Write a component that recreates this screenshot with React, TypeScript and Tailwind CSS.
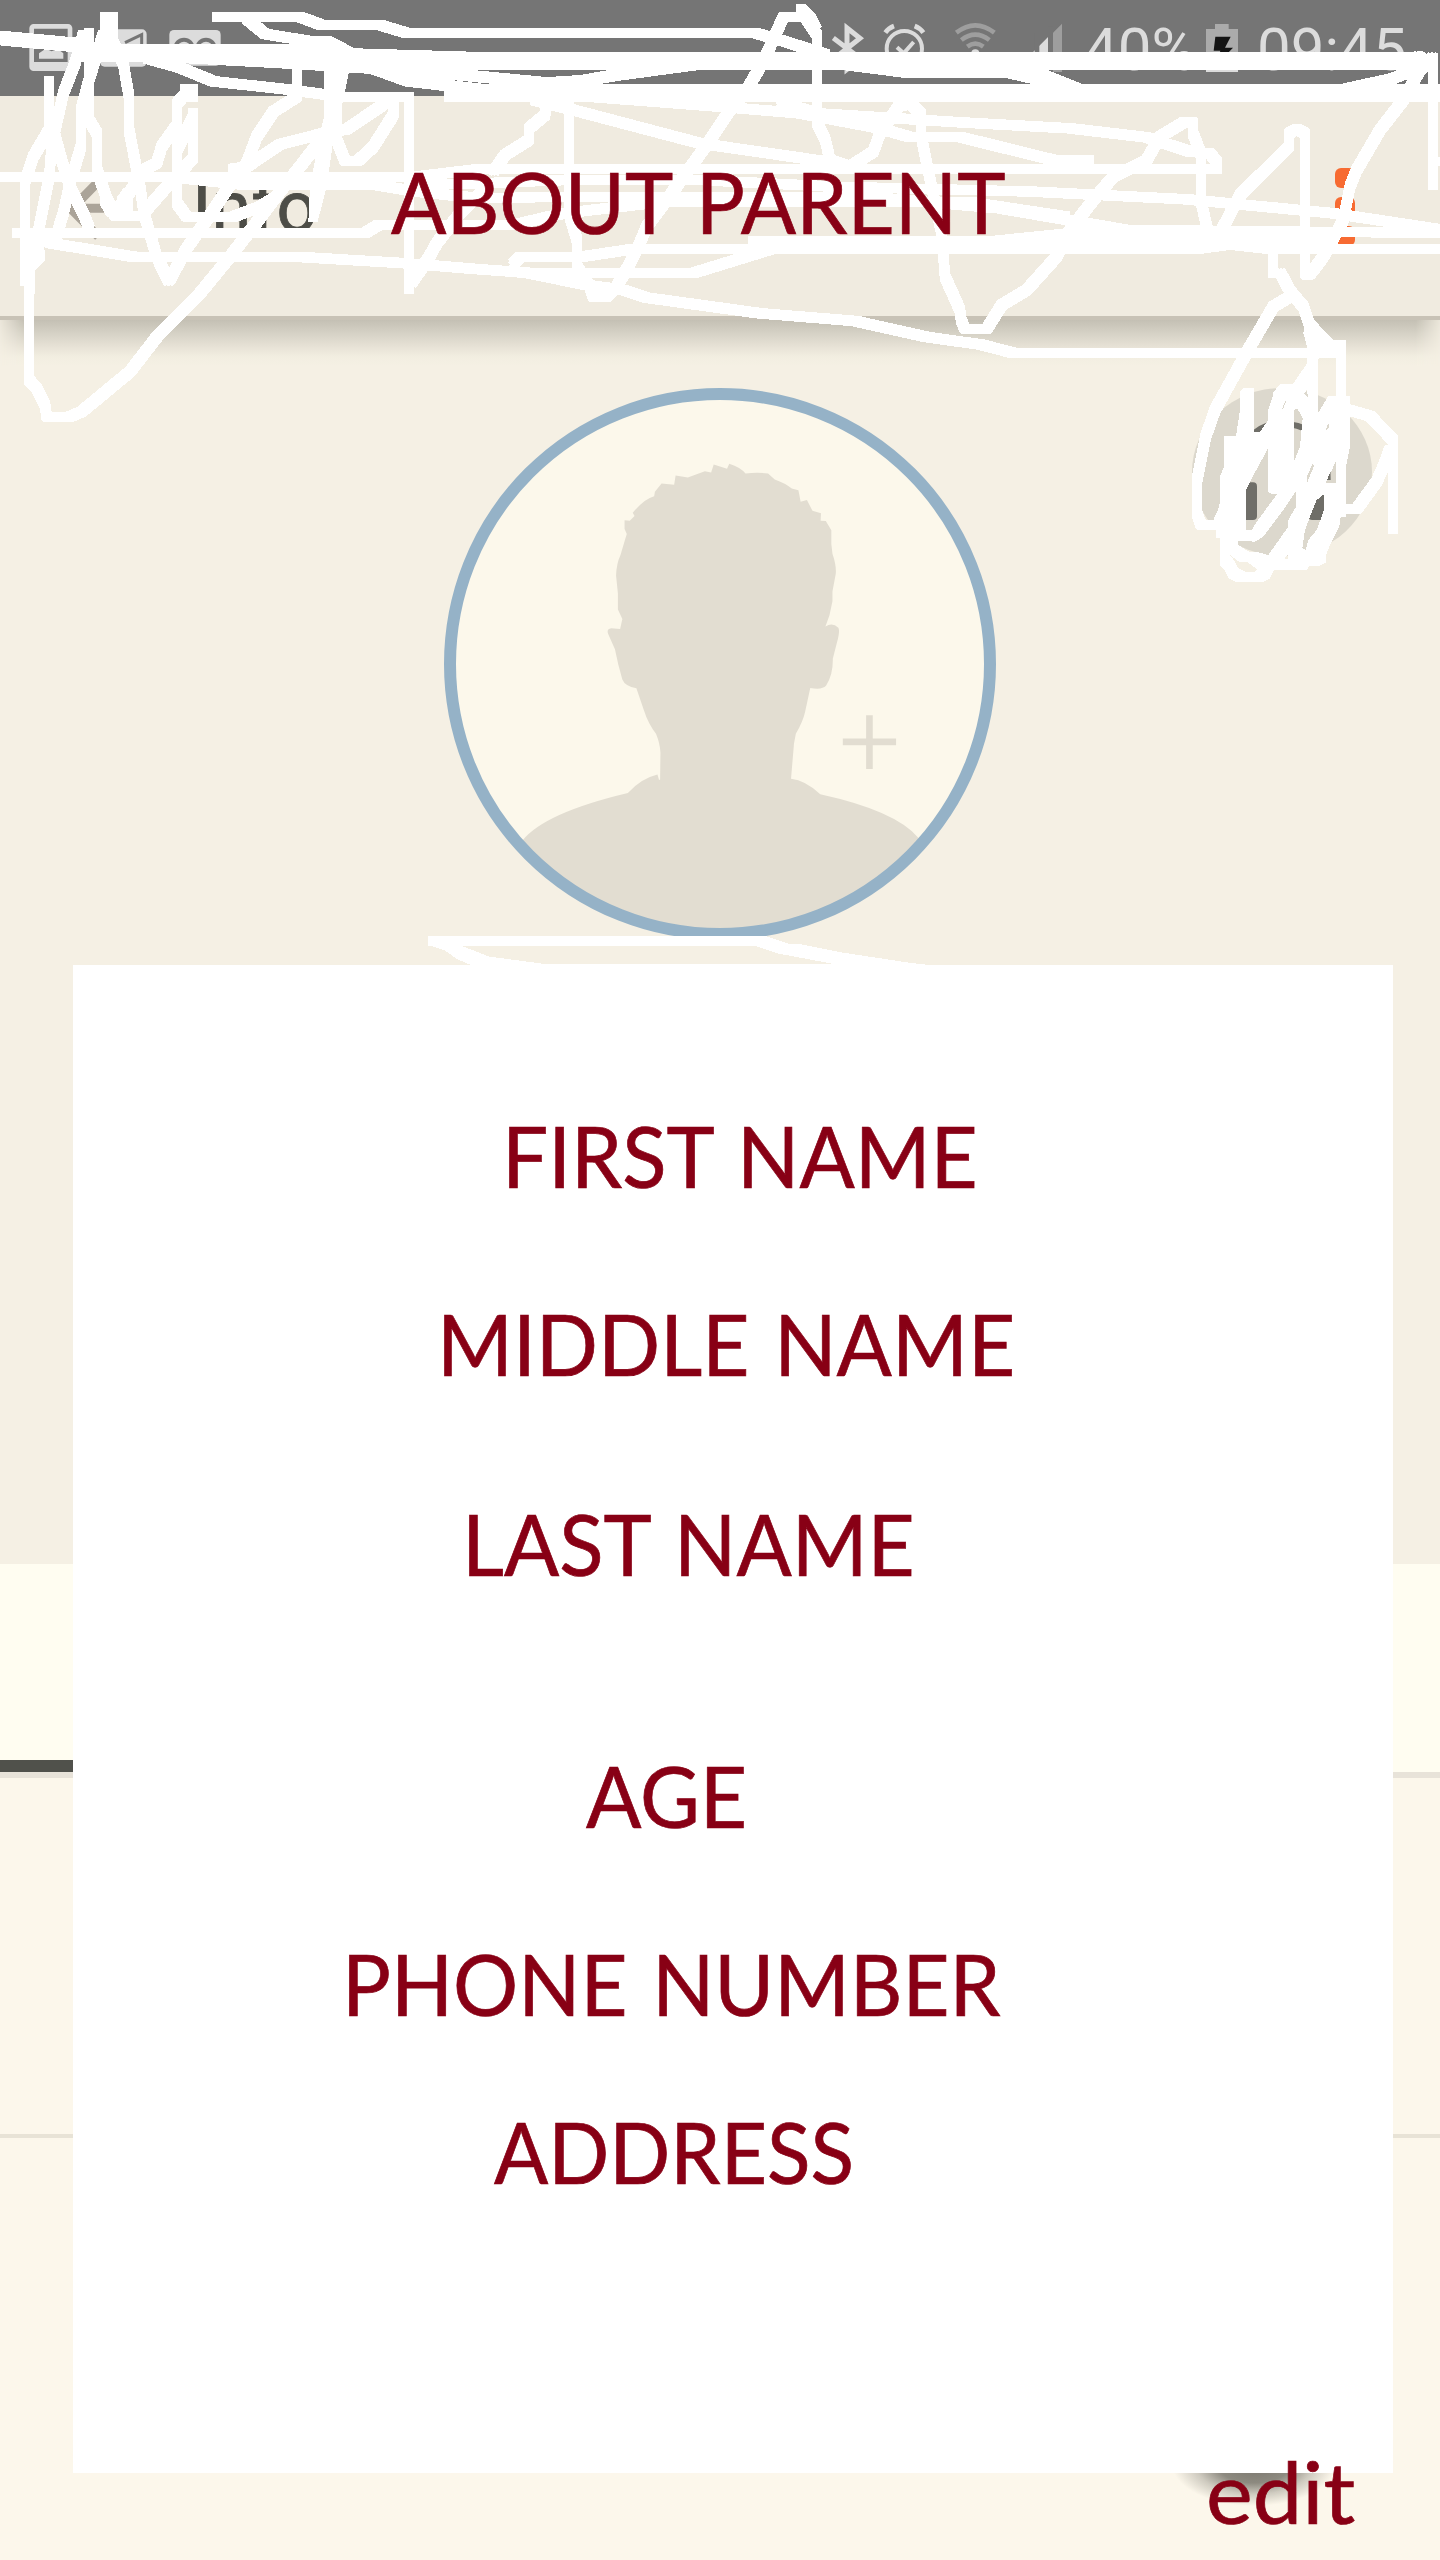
import React from "react";

const LABEL =
  "block w-fit whitespace-nowrap origin-left font-['Lato',sans-serif] text-[85px] leading-[85px] text-[#880015] [-webkit-text-stroke:0.7px_#880015] [word-spacing:4px]";

const FIELDS = [
  { text: "FIRST NAME", className: "ml-[429px] mt-[148px] scale-x-[0.961]" },
  { text: "MIDDLE NAME", className: "ml-[364px] mt-[103px] scale-x-[0.962]" },
  { text: "LAST NAME", className: "ml-[389px] mt-[115px] scale-x-[0.961]" },
  { text: "AGE", className: "ml-[513px] mt-[167px] scale-x-[0.964]" },
  { text: "PHONE NUMBER", className: "ml-[269px] mt-[103px] scale-x-[0.958]" },
  { text: "ADDRESS", className: "ml-[421px] mt-[83px] scale-x-[0.944]" },
];

function NotificationIcons() {
  return (
    <svg width="230" height="96" viewBox="0 0 690 288">
      <g fill="none" stroke="#dcdcdc" strokeWidth="14">
        <rect x="95" y="79" width="115" height="127" rx="6" />
        <path d="M100 196H206" strokeWidth="20" />
      </g>
      <path d="M117 176V160l20-14 18 8 18-8 17 14v16z" fill="#dcdcdc" />
      <rect x="300" y="88" width="140" height="112" rx="14" fill="#dcdcdc" />
      <path d="M375 128L425 104V140" fill="none" stroke="#757575" strokeWidth="9" />
      <rect x="508" y="90" width="154" height="107" rx="14" fill="#dcdcdc" />
      <g fill="none" stroke="#757575" strokeWidth="12">
        <circle cx="552" cy="145" r="26" />
        <circle cx="618" cy="145" r="26" />
      </g>
    </svg>
  );
}

function SystemIcons() {
  return (
    <svg width="258" height="96" viewBox="2478 0 774 288">
      <path d="M2500 114L2582 176L2541 208V84L2580 115L2500 178" fill="none" stroke="#dcdcdc" strokeWidth="15" />
      <g fill="none" stroke="#dcdcdc">
        <circle cx="2713" cy="146" r="53" strokeWidth="12" />
        <path d="M2691 142l20 18 30-34" strokeWidth="12" />
        <path d="M2656 98q10-14 26-20M2770 98q-10-14-26-20" strokeWidth="14" />
      </g>
      <g fill="none" stroke="#9e9e9e" strokeWidth="14">
        <path d="M2869 98q57-44 114 0" />
        <path d="M2884 120q42-32 84 0" />
        <path d="M2902 140q24-18 48 0" />
      </g>
      <circle cx="2926" cy="160" r="12" fill="#dcdcdc" />
      <path d="M3040 216L3145 110V216z" fill="#dcdcdc" />
      <path d="M3111 100V216M3151 80V216" stroke="#757575" strokeWidth="14" />
      <path d="M3159 98l27-27V216h-27z" fill="#9e9e9e" />
    </svg>
  );
}

function BatteryIcon() {
  return (
    <svg width="32" height="96" viewBox="3618 0 96 288">
      <path d="M3618 87h27V72h41v15h28v129h-96z" fill="#ababab" />
      <path d="M3618 180h96v36h-96z" fill="#dcdcdc" />
      <path d="M3646 110h46l-17 33h24l-50 52 12-43h-20z" fill="#141414" />
    </svg>
  );
}

function Avatar() {
  return (
    <svg width="552" height="552" viewBox="444 388 552 552">
      <defs>
        <clipPath id="face">
          <circle cx="720" cy="664" r="266" />
        </clipPath>
      </defs>
      <circle cx="720" cy="664" r="270" fill="#fcf8eb" />
      <g clipPath="url(#face)" fill="#e2ddd1">
        <g transform="translate(430 370) scale(.36990 .39541)">
          <path d="M622 1036L623 968Q622 945 611 920Q590 895 578 860L558 805Q527 800 520 783L509 745L500 706L482 668Q476 655 490 653L514 655L520 630L508 606V565L503 520Q504 490 515 468L527 430L532 415L526 402V380L540 381L553 369L548 361Q580 325 606 319L608 308L626 287L660 290L664 267L697 272L743 256L760 259L767 239L803 250L809 237Q840 246 853 262Q885 258 914 262L932 277Q960 286 978 300L996 304L1002 333L1019 329L1034 356L1057 362L1056 381L1070 382L1085 405V440L1088 465Q1099 495 1097 515L1088 560V585L1080 620L1069 649Q1088 637 1104 652Q1109 660 1100 690L1089 730Q1090 770 1071 798Q1060 810 1028 804L1014 865Q1008 890 989 920L984 945L976 1034Q1015 1038 1055 1073Q1260 1115 1320 1183V1568H250V1190Q310 1120 535 1070Q570 1033 615 1023L619 1036z" />
          <path d="M1179 873h18v59h63v17h-63v60h-18v-60h-63v-17h63z" />
        </g>
      </g>
      <circle cx="720" cy="664" r="270" fill="none" stroke="#95b2c7" strokeWidth="12" />
    </svg>
  );
}

// Stamping each stroke on this grid imitates a square 30-unit brush.
const BRUSH = [-10, 0, 10].flatMap((x) => [-10, 0, 10].map((y) => [x, y]));

function BrushStrokes() {
  return (
    <>
      <g strokeWidth="34">
        <path d="M255 159H880L1060 172L1440 183H4250" />
        <path d="M1342 279H4330" />
        <path d="M327 46V160" />
        <path d="M567 262V296" />
      </g>
      <path d="M-10 113L240 136L300 159" strokeWidth="23" />
      <path d="M540 172L875 190L1120 205L1225 243L1440 268" strokeWidth="13" />
      <path d="M1000 190L1440 230L1640 249L1750 242L1850 225L2110 190" strokeWidth="14" />
      <path d="M646 51H900L965 75H1140L1220 99H2265L2330 117L2480 164" />
      <path d="M738 55L795 102L920 122L985 125L1060 164" />
      <path d="M440 175L540 203L640 244L860 268L1030 291H1232" />
      <path d="M891 190V290L820 335L770 410L740 490L690 555L630 645L560 745L508 842" />
      <path d="M327 100L370 190L387 290V390L420 560L432 640L470 770L508 847" />
      <path d="M147 238V390L100 470L75 545V847" />
      <path d="M250 100L225 190L190 280L163 400L185 480L210 560L250 640L270 690" />
      <path d="M267 95V360L291 400V510L318 590L345 648H440" />
      <path d="M310 100L267 240L243 330V440L210 550L190 640L165 720" />
      <path d="M156 420L148 530L128 630L112 710" />
      <path d="M553 285L531 310V610L560 650H700L780 620L830 590" />
      <path d="M579 334V475L500 560L430 640" />
      <path d="M579 350L531 450M531 375L485 440L470 490L430 510L400 560L360 620" />
      <path d="M-10 531H1240L1440 507H3655" />
      <path d="M550 535L740 555H1130L1250 575L1440 595L1700 590H2600L3000 625L3380 690L4330 699" />
      <path d="M1240 553L1440 550L1700 540H2100L2500 560L3100 575L3560 598L4000 640L4330 690" />
      <path d="M46 699H1095L1135 675H1540L1690 640L1990 605H2900L3200 650" />
      <path d="M90 700V857L87 880V1140L110 1165L135 1215L140 1250H210L245 1235L390 1115L475 1005L600 880L690 770L760 680L820 600L900 500L985 390" />
      <path d="M75 720H110L120 770L88 800M90 705L155 730L405 771H900L1220 790L1440 808L1580 818L1760 855L1870 870L1940 893L2280 940L2565 963L2775 1010L2880 1025L2940 1033L3040 1059H4020" />
      <path d="M1227 286V871M1233 852L1285 775L1310 730L1380 640L1450 570" />
      <path d="M1010 330V420L1035 482H1075L1120 440L1180 345V300" />
      <path d="M1170 300L1040 388L970 400L840 433L740 500L694 507" />
      <path d="M1640 310L1635 345L1587 385V420L1515 465L1480 515" />
      <path d="M1707 306V640L1731 720V800L1770 860L1779 890H1820L1850 860L1890 790L1915 740L1940 680L2000 600L2080 490L2130 420L2190 330L2240 270L2275 210L2310 140L2350 51H2415L2451 105V370L2476 420L2490 480L2550 500L2620 455L2640 400L2695 320L2730 310L2762 340V400L2780 490L2825 700L2835 830L2880 930L2883 960L2895 987H2960L3005 915L3080 870L3170 770L3210 690L3280 600L3340 530L3440 480L3480 410L3555 365H3579V400L3602 460V600L3625 700" />
      <path d="M1600 300L1720 330L2100 430L2480 485" />
      <path d="M1740 288L2160 320L2400 340L2630 383L2730 411H2880L3160 480H3272" />
      <path d="M2340 305L2450 340L2690 355L2880 367L3210 385L3440 412L3570 455L3630 460L3650 485V512" />
      <path d="M1538 792L1560 771H1740L1900 747H2300M1560 819H2080L2330 742" />
      <path d="M3960 747H4330" />
      <path d="M3665 690L3720 585L3867 440V400L3890 387L3915 400V823H3930L3970 770L4030 660L4050 560L4070 510L4140 390L4210 300L4260 210L4299 170V560" />
      <path d="M4020 270L4180 235L4290 190M4250 166L4275 180" />
      <path d="M2540 195L2730 219H3030L3230 265M3080 205L3230 265" />
      <path d="M3819 755V823" />
      <path d="M3840 815L3868 870L3910 920L3930 980L3938 1050V1100L3890 1170M3870 890L3820 920L3750 1040L3645 1230L3617 1310L3591 1440V1540L3603 1575H3660L3680 1500" />
      <path d="M3939 1000V1240M4023 1035V1540" />
      <path d="M4040 1228L4110 1248L4179 1320V1592M4170 1345L4150 1400L4130 1445L4070 1527H4023" />
    </>
  );
}

function Scribbles() {
  return (
    <svg
      className="pointer-events-none absolute inset-0"
      width="1440"
      height="980"
      viewBox="0 0 4320 2940"
      shapeRendering="crispEdges"
    >
      {BRUSH.map(([x, y]) => (
        <g
          key={`${x},${y}`}
          transform={`translate(${x} ${y})`}
          fill="none"
          stroke="#fff"
          strokeWidth="11"
          strokeLinejoin="bevel"
        >
          <BrushStrokes />
        </g>
      ))}
      <g fill="#fff">
        <path d="M972 200H1050L1035 275L1018 350L1000 420L980 560L953 665H925L930 560L960 400L972 350z" />
        <path d="M2388 12H2418L2445 40L2466 80L2440 100L2412 60H2388z" />
        <path d="M2244 708H2970L3205 684H4000V762H3800L3690 750L3600 762H2244z" />
        <path d="M3920 920L3938 955L4000 1020H4038V1070H3960L3940 1100L3910 1000z" />
        <path d="M300 575L330 598L350 605L352 590L370 565H400V650H320L300 615z" />
        <path d="M4299 472H4320V498H4299z" />
        <path
          transform="translate(3480 900)"
          fillRule="evenodd"
          d="M192 408H228L240 330V275L250 264H282V395H300L325 360V330L338 290V280L360 252H400L440 200V170H474V340L505 288H570V440L558 500V640L543 645L538 680L510 735L498 765V787L480 797H450L440 809H343L330 835L310 845H225L205 835L195 812L180 798V713H168V690L160 660L180 617V530L192 500z
          M324 445V575L335 582H352L290 665L275 690H258V570L270 545z
          M408 573V620L385 660V680L325 765L295 757H270L235 735V722L285 725L310 710L370 630z
          M412 325L428 355L420 440L403 482V330z
          M440 552L440 530L460 487L461 500z
          M527 485V550H497L505 530L518 505z
          M470 600L492 583V630L470 690L445 720L437 750L427 745L435 690L450 650z
          M210 765L240 787H262L293 808L285 815H255L235 805L225 785z
          M432 282L442 267L443 293z M500 378L506 370V384L499 390z M367 325L376 301L378 305L368 329z M372 778L384 762V777z"
        />
        <path
          transform="scale(3)"
          fillRule="evenodd"
          d="M428 936H766L789 944H800L839 952L911 963L930 965H471L457 959L445 950.500L432 946H428z M462 946L489 956.500L545 964H834L778 953.500L755 946z"
        />
      </g>
    </svg>
  );
}

export default function App() {
  return (
    <div className="relative grid h-[2560px] w-[1440px] overflow-hidden">
      <div className="col-start-1 row-start-1 flex flex-col">
        <div className="flex h-24 items-center bg-[#757575] pr-[32px] font-['Roboto',sans-serif] text-[60px] leading-[60px] text-[#dcdcdc]">
          <NotificationIcons />
          <div className="ml-auto flex items-center">
            <SystemIcons />
            <span className="w-[122px] pt-[4px]">40%</span>
            <BatteryIcon />
            <span className="w-[170px] pl-[19px] pt-[4px]">09:45</span>
          </div>
        </div>

        <header className="flex h-56 items-start border-b-4 border-[#c8c2b6] bg-[#f0ebe0] pr-[85px]">
          <svg width="192" height="220" viewBox="0 288 576 660">
            <path d="M290 550L214 628L295 710M214 625H384" fill="none" stroke="#aba499" strokeWidth="27" />
          </svg>
          <span className="mt-[76px] w-[199px] font-['Roboto',sans-serif] text-[72px] leading-[72px] text-[#4d4d47] [-webkit-text-stroke:0.8px_#4d4d47]">
            Info
          </span>
          <h1 className={`${LABEL} relative z-10 mt-[63px] scale-x-[0.963]`}>ABOUT PARENT</h1>
          <div className="ml-auto mt-[72px] flex flex-col gap-[9px]">
            <i className="size-5 rounded-md bg-[#f76b32]" />
            <i className="size-5 rounded-md bg-[#f76b32]" />
            <i className="size-5 rounded-md bg-[#f76b32]" />
          </div>
        </header>

        <section className="flex h-[1244px] flex-col bg-[#f5f0e4]">
          <div className="h-[46px] bg-[linear-gradient(to_bottom,#c4c0b4,#d5d1c5_28%,#e8e3d7_60%,#f2eee1_80%,#f5f0e4)] [mask-image:linear-gradient(to_right,#0003,#000_24px,#000_1416px,#0003)]" />
          <div className="grid grid-cols-[1fr_552px_1fr] items-start pr-[68px] pl-[68px] pt-[22px]">
            <div className="col-start-2">
              <Avatar />
            </div>
            <svg className="justify-self-end" width="180" height="168" viewBox="96 264 540 504">
              <ellipse cx="366" cy="516" rx="270" ry="252" fill="#dcd8cd" />
              <path d="M250 560V500Q250 372 366 372Q503 372 503 540" fill="none" stroke="#6f6e68" strokeWidth="18" />
              <rect x="244" y="547" width="47" height="113" rx="12" fill="#6f6e68" />
              <rect x="445" y="547" width="47" height="113" rx="12" fill="#6f6e68" />
            </svg>
          </div>
        </section>
        <section className="flex h-[214px] flex-col justify-end border-b-[6px] border-[#e8e3d9] bg-[#fffdf1]">
          <div className="h-3 w-1/2 bg-[#50514b]" />
        </section>
        <section className="h-[360px] border-b-4 border-[#e8e3d6] bg-[#fcf7eb]" />
        <section className="flex flex-1 items-end justify-end bg-[#fcf7eb] pr-[104px] pb-[54px]">
          <div className="h-[84px] w-[164px] bg-[radial-gradient(closest-side,#77746b,#8d8a80_45%,#cfcbc0_72%,#fcf7eb00)]" />
        </section>
      </div>

      <Scribbles />

      <div className="pointer-events-none relative col-start-1 row-start-1 flex flex-col pt-[965px] pl-[73px] pr-[47px]">
        <main className="flex h-[1508px] flex-col items-start bg-white">
          {FIELDS.map((field) => (
            <label key={field.text} className={`${LABEL} ${field.className}`}>
              {field.text}
            </label>
          ))}
        </main>
        <button className={`${LABEL} -mt-6 ml-[1133px] scale-x-[1.04]`}>edit</button>
      </div>
    </div>
  );
}
